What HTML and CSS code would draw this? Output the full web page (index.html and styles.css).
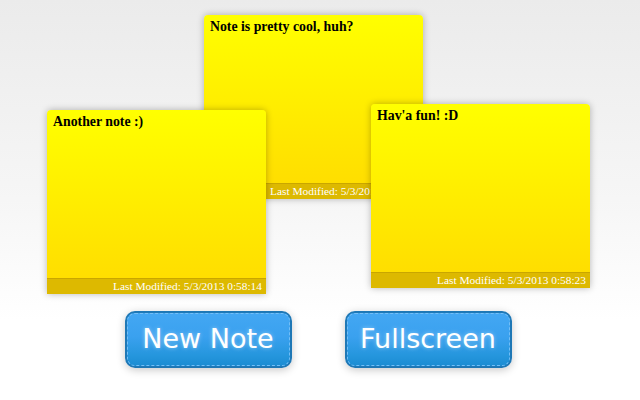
FILE: index.html
```html
<!DOCTYPE html>
<html>
<head>
<meta charset="utf-8">
<link rel="stylesheet" href="styles.css">
</head>
<body>
<div class="page">
  <div class="board">
    <div class="note note-a">
      <div class="note-body">Note is pretty cool, huh?</div>
      <div class="note-foot">Last Modified: 5/3/2013 0:58:05</div>
    </div>
    <div class="note note-b">
      <div class="note-body">Another note :)</div>
      <div class="note-foot">Last Modified: 5/3/2013 0:58:14</div>
    </div>
    <div class="note note-c">
      <div class="note-body">Hav'a fun! :D</div>
      <div class="note-foot">Last Modified: 5/3/2013 0:58:23</div>
    </div>
  </div>
  <div class="actions">
    <button class="btn">New Note</button>
    <button class="btn">Fullscreen</button>
  </div>
</div>
</body>
</html>
```
FILE: styles.css
```css
html, body {
  margin: 0;
  padding: 0;
}
body {
  width: 640px;
  height: 400px;
  overflow: hidden;
  background: linear-gradient(#ebebeb 0px, #f6f6f6 200px, #ffffff 320px, #ffffff 400px);
  font-family: "Liberation Serif", "Times New Roman", serif;
}
.page {
  display: flex;
  flex-direction: column;
}
.board {
  position: relative;
  height: 311px;
}
.note {
  position: absolute;
  width: 219px;
  height: 184px;
  display: flex;
  flex-direction: column;
  border-radius: 4px 4px 0 0;
  box-shadow: 0 0 7px rgba(0, 0, 0, 0.28);
  overflow: hidden;
}
.note-a { left: 204px; top: 15px; }
.note-b { left: 47px; top: 110px; }
.note-c { left: 371px; top: 104px; }
.note-body {
  flex: 1;
  background: linear-gradient(#ffff00, #ffde00);
  padding: 5px 6px;
  font-weight: bold;
  font-size: 13.8px;
  line-height: 14px;
  color: #000;
}
.note-foot {
  height: 15px;
  border-top: 1px solid #c9a600;
  background: #ddb900;
  color: #fff;
  font-size: 11.4px;
  line-height: 15px;
  text-align: right;
  padding-right: 4px;
  white-space: nowrap;
}
.actions {
  display: flex;
  justify-content: center;
  gap: 53px;
  padding-right: 4px;
}
.btn {
  position: relative;
  width: 167px;
  height: 57px;
  margin: 0;
  padding: 0 0 3px 0;
  border: 2px solid #1f78b6;
  border-radius: 10px;
  background: linear-gradient(#43a7f3 0%, #3aa1ef 45%, #2596dd 80%, #1b8cd2 100%);
  box-shadow: 0 2px 8px rgba(0, 0, 0, 0.22);
  color: #fff;
  font-family: "DejaVu Sans", Verdana, sans-serif;
  font-size: 27px;
  text-shadow: 0 0 4px rgba(255, 255, 255, 0.45);
}
.btn::before {
  content: "";
  position: absolute;
  inset: 0;
  border: 1px dashed #74bff7;
  border-radius: 8px;
}
```
